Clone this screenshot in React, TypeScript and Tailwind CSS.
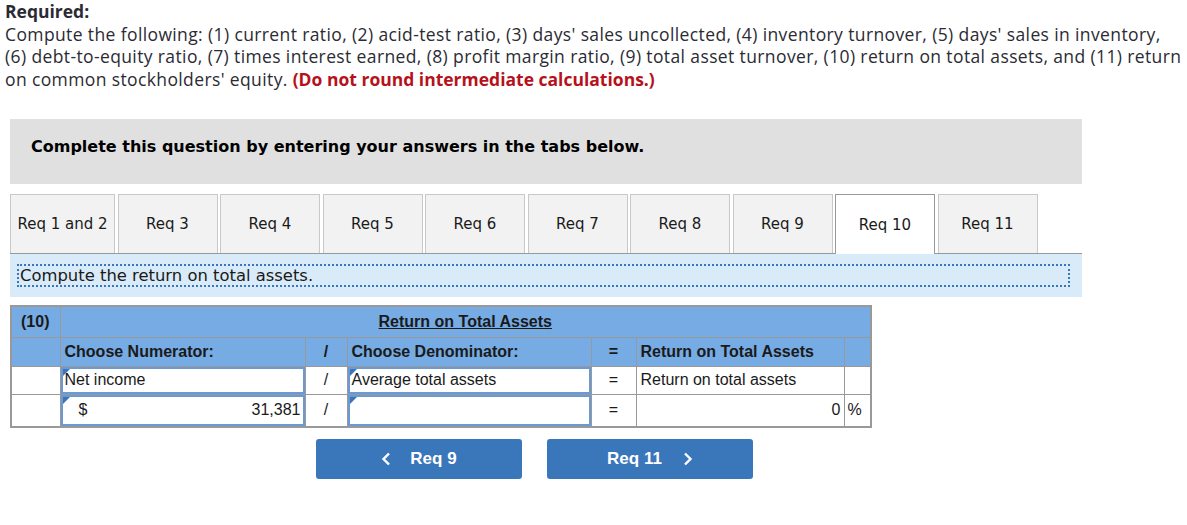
import React from 'react';

const tabs = ['Req 1 and 2', 'Req 3', 'Req 4', 'Req 5', 'Req 6', 'Req 7', 'Req 8', 'Req 9', 'Req 10', 'Req 11'];
const activeTab = 'Req 10';

const verdana = { fontFamily: '"DejaVu Sans", Verdana, sans-serif' };
const arial = { fontFamily: '"Liberation Sans", Arial, sans-serif' };

const Corner = () => (
  <span className="absolute left-0 top-0 w-0 h-0 border-t-[7px] border-r-[7px] border-t-[#3a76ba] border-r-transparent" />
);

export default function App() {
  return (
    <div className="w-[1187px] h-[525px] bg-white text-[#333]">
      <div className="pl-[5px] pt-[0px] text-[17.5px] leading-[22.6px] tracking-[0.38px] text-[#2b2b33] whitespace-nowrap" style={{ fontFamily: '"Open Sans", Lato, sans-serif' }}>
        <div className="font-bold tracking-normal">Required:</div>
        <div>
          Compute the following: (1) current ratio, (2) acid-test ratio, (3) days' sales uncollected, (4) inventory turnover, (5) days' sales in inventory,
          <br />
          (6) debt-to-equity ratio, (7) times interest earned, (8) profit margin ratio, (9) total asset turnover, (10) return on total assets, and (11) return
          <br />
          on common stockholders' equity. <span className="font-bold tracking-normal text-[#b5121b]">(Do not round intermediate calculations.)</span>
        </div>
      </div>

      <div className="ml-[10px] mt-[29px] w-[1072px]">
        <div className="h-[65px] bg-[#e0e0e0] pt-[16px] pl-[21px] text-[16px] font-bold text-black" style={verdana}>
          Complete this question by entering your answers in the tabs below.
        </div>

        <div className="mt-[10px] flex gap-[2.5px] items-end h-[59px]" style={verdana}>
          {tabs.map((t, i) => (
            <div
              key={t}
              className={`h-[59px] ${i === 0 ? 'w-[105px]' : 'w-[100px]'} flex items-center justify-center text-[15px] text-[#1a1a1a] border border-b-0 ${
                t === activeTab ? 'bg-white border-[#999] h-[60px] -mb-[1px] relative z-10' : 'bg-[#f2f2f2] border-[#c8c8c8]'
              }`}
            >
              {t}
            </div>
          ))}
        </div>

        <div className="border-t border-[#999] bg-[#d9ebf9] h-[44px] pt-[10px] pl-[7px] pr-[12px]">
          <div className="h-[23px] border-2 border-dotted border-[#3a76ba] flex items-center pl-[1px] text-[16.4px] text-[#1a1a1a]" style={verdana}>
            Compute the return on total assets.
          </div>
        </div>

        <table className="mt-[8px] border-collapse border-2 border-[#999] text-[16px] text-[#1a1a1a]" style={arial}>
          <colgroup>
            <col className="w-[49px]" />
            <col className="w-[245px]" />
            <col className="w-[42px]" />
            <col className="w-[244px]" />
            <col className="w-[45px]" />
            <col className="w-[208px]" />
            <col className="w-[27px]" />
          </colgroup>
          <tbody>
            <tr className="h-[31px] bg-[#76abe3] font-bold">
              <td className="border border-[#999] pl-[9px] align-middle">(10)</td>
              <td colSpan={6} className="border border-[#999] text-center">
                <span className="underline">Return on Total Assets</span>
              </td>
            </tr>
            <tr className="h-[29px] bg-[#76abe3] font-bold">
              <td className="border border-[#999]" />
              <td className="border border-[#999] pl-[4px]">Choose Numerator:</td>
              <td className="border border-[#999] text-center">/</td>
              <td className="border border-[#999] pl-[4px]">Choose Denominator:</td>
              <td className="border border-[#999] text-center">=</td>
              <td className="border border-[#999] pl-[4px]">Return on Total Assets</td>
              <td className="border border-[#999]" />
            </tr>
            <tr className="h-[28px] bg-white">
              <td className="border border-[#999]" />
              <td className="border border-[#999] p-0">
                <div className="relative h-[27px] border-2 border-[#6a9ad6] flex items-center pl-[2px]">
                  <Corner />
                  Net income
                </div>
              </td>
              <td className="border border-[#999] text-center">/</td>
              <td className="border border-[#999] p-0">
                <div className="relative h-[27px] border-2 border-[#6a9ad6] flex items-center pl-[2px]">
                  <Corner />
                  Average total assets
                </div>
              </td>
              <td className="border border-[#999] text-center">=</td>
              <td className="border border-[#999] pl-[4px]">Return on total assets</td>
              <td className="border border-[#999]" />
            </tr>
            <tr className="h-[32px] bg-white">
              <td className="border border-[#999]" />
              <td className="border border-[#999] p-0">
                <div className="relative h-[31px] border-2 border-[#6a9ad6] flex items-center justify-between pl-[16px] pr-[2px]">
                  <Corner />
                  <span>$</span>
                  <span>31,381</span>
                </div>
              </td>
              <td className="border border-[#999] text-center">/</td>
              <td className="border border-[#999] p-0">
                <div className="relative h-[31px] border-2 border-[#6a9ad6]">
                  <Corner />
                </div>
              </td>
              <td className="border border-[#999] text-center">=</td>
              <td className="border border-[#999] text-right pr-[3px]">0</td>
              <td className="border border-[#999] pl-[3px]">%</td>
            </tr>
          </tbody>
        </table>

        <div className="mt-[11px] ml-[306px] flex gap-[25px] text-[17px] font-bold text-white" style={arial}>
          <button className="w-[206px] h-[40px] rounded-[3px] bg-[#3a76ba] flex items-center justify-center gap-[19px]">
            <svg width="10" height="14" viewBox="0 0 10 14" fill="none" stroke="white" strokeWidth="2.4">
              <path d="M8 1.5 L2.5 7 L8 12.5" />
            </svg>
            <span>Req 9</span>
          </button>
          <button className="w-[206px] h-[40px] rounded-[3px] bg-[#3a76ba] flex items-center justify-center gap-[21px]">
            <span>Req 11</span>
            <svg width="10" height="14" viewBox="0 0 10 14" fill="none" stroke="white" strokeWidth="2.4">
              <path d="M2 1.5 L7.5 7 L2 12.5" />
            </svg>
          </button>
        </div>
      </div>
    </div>
  );
}
